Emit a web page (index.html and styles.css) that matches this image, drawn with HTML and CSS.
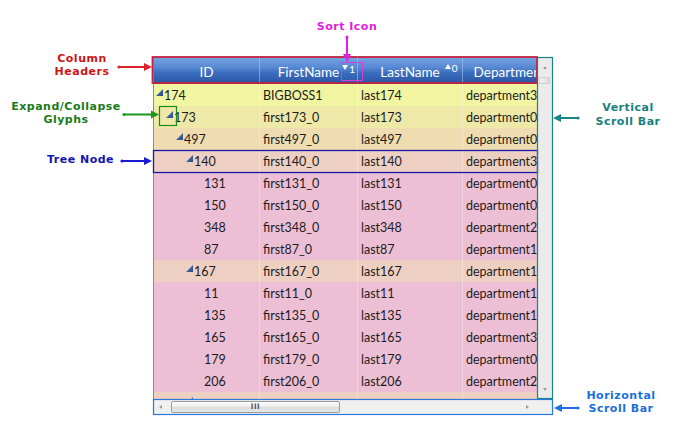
FILE: index.html
```html
<!DOCTYPE html>
<html>
<head>
<meta charset="utf-8">
<link rel="stylesheet" href="styles.css">
</head>
<body>
<div class="canvas">
  <div class="tree-grid">
    <div class="viewport">
      <div class="header">
        <div class="hcell c-id"><span class="htext">ID</span></div>
        <div class="hcell c-first"><span class="htext">FirstName<span class="sort"><svg width="6" height="5" viewBox="0 0 6 5"><polygon points="0,0 6,0 3,5" fill="#fff"/></svg><span class="snum">1</span></span></span></div>
        <div class="hcell c-last"><span class="htext">LastName<span class="sort up"><svg width="6" height="5" viewBox="0 0 6 5"><polygon points="0,5 6,5 3,0" fill="#fff"/></svg><span class="snum">0</span></span></span></div>
        <div class="hcell c-dept"><span class="htext">Department</span></div>
      </div>
      <div class="rows">
        <div class="row lv0"><div class="cell c-id ind0"><i class="glyph"></i>174</div><div class="cell c-first">BIGBOSS1</div><div class="cell c-last">last174</div><div class="cell c-dept">department3</div></div>
        <div class="row lv1"><div class="cell c-id ind1"><i class="glyph"></i>173</div><div class="cell c-first">first173_0</div><div class="cell c-last">last173</div><div class="cell c-dept">department0</div></div>
        <div class="row lv2"><div class="cell c-id ind2"><i class="glyph"></i>497</div><div class="cell c-first">first497_0</div><div class="cell c-last">last497</div><div class="cell c-dept">department0</div></div>
        <div class="row lv3"><div class="cell c-id ind3"><i class="glyph"></i>140</div><div class="cell c-first">first140_0</div><div class="cell c-last">last140</div><div class="cell c-dept">department3</div></div>
        <div class="row leaf"><div class="cell c-id ind4"><i class="noglyph"></i>131</div><div class="cell c-first">first131_0</div><div class="cell c-last">last131</div><div class="cell c-dept">department0</div></div>
        <div class="row leaf"><div class="cell c-id ind4"><i class="noglyph"></i>150</div><div class="cell c-first">first150_0</div><div class="cell c-last">last150</div><div class="cell c-dept">department0</div></div>
        <div class="row leaf"><div class="cell c-id ind4"><i class="noglyph"></i>348</div><div class="cell c-first">first348_0</div><div class="cell c-last">last348</div><div class="cell c-dept">department2</div></div>
        <div class="row leaf"><div class="cell c-id ind4"><i class="noglyph"></i>87</div><div class="cell c-first">first87_0</div><div class="cell c-last">last87</div><div class="cell c-dept">department1</div></div>
        <div class="row lv3"><div class="cell c-id ind3"><i class="glyph"></i>167</div><div class="cell c-first">first167_0</div><div class="cell c-last">last167</div><div class="cell c-dept">department1</div></div>
        <div class="row leaf"><div class="cell c-id ind4"><i class="noglyph"></i>11</div><div class="cell c-first">first11_0</div><div class="cell c-last">last11</div><div class="cell c-dept">department1</div></div>
        <div class="row leaf"><div class="cell c-id ind4"><i class="noglyph"></i>135</div><div class="cell c-first">first135_0</div><div class="cell c-last">last135</div><div class="cell c-dept">department1</div></div>
        <div class="row leaf"><div class="cell c-id ind4"><i class="noglyph"></i>165</div><div class="cell c-first">first165_0</div><div class="cell c-last">last165</div><div class="cell c-dept">department3</div></div>
        <div class="row leaf"><div class="cell c-id ind4"><i class="noglyph"></i>179</div><div class="cell c-first">first179_0</div><div class="cell c-last">last179</div><div class="cell c-dept">department0</div></div>
        <div class="row leaf"><div class="cell c-id ind4"><i class="noglyph"></i>206</div><div class="cell c-first">first206_0</div><div class="cell c-last">last206</div><div class="cell c-dept">department2</div></div>
        <div class="row lv3"><div class="cell c-id ind3"><i class="glyph"></i></div><div class="cell c-first"></div><div class="cell c-last"></div><div class="cell c-dept"></div></div>
      </div>
    </div>
    <div class="vscroll">
      <span class="arr arr-up"></span>
      <span class="vthumb"></span>
      <span class="vspace"></span>
      <span class="arr arr-down"></span>
    </div>
    <div class="hscroll">
      <span class="arr arr-left"></span>
      <span class="hthumb"><span class="grip">III</span></span>
      <span class="hspace"></span>
      <span class="arr arr-right"></span>
    </div>
    <div class="corner"></div>
  </div>

  <svg class="overlay" width="699" height="432" viewBox="0 0 699 432">
    <rect x="152.5" y="57" width="384.5" height="26" fill="none" stroke="#c4223f" stroke-width="1.8"/>
    <rect x="159.5" y="106.5" width="17" height="19" fill="none" stroke="#1c8a1c" stroke-width="1.2"/>
    <rect x="153.5" y="150.5" width="384" height="22" fill="none" stroke="#1616a8" stroke-width="1.3"/>
    <rect x="341.5" y="62.5" width="21" height="18" fill="none" stroke="#d040e0" stroke-width="1"/>
    <rect x="537.5" y="57.5" width="15" height="341" fill="none" stroke="#1a8585" stroke-width="1.2"/>
    <rect x="153.5" y="399.5" width="399" height="15" fill="none" stroke="#2a78d8" stroke-width="1.2"/>

    <line x1="119" y1="67" x2="146" y2="67" stroke="#e02028" stroke-width="2"/>
    <circle cx="119" cy="67" r="1.6" fill="#e02028"/>
    <polygon points="152,67 144,63 144,71" fill="#e02028"/>

    <line x1="124" y1="114.5" x2="152" y2="114.5" stroke="#1c961c" stroke-width="2"/>
    <circle cx="124" cy="114.5" r="1.6" fill="#1c961c"/>
    <polygon points="159,114.5 151,110.5 151,118.5" fill="#1c961c"/>

    <line x1="122" y1="161" x2="146" y2="161" stroke="#1a1ad0" stroke-width="2"/>
    <circle cx="122" cy="161" r="1.6" fill="#1a1ad0"/>
    <polygon points="152,161 144,157 144,165" fill="#1a1ad0"/>

    <line x1="347" y1="37" x2="347" y2="55" stroke="#e020e0" stroke-width="2"/>
    <circle cx="347" cy="37" r="1.6" fill="#e020e0"/>
    <polygon points="347,62 343,54 351,54" fill="#e020e0"/>

    <line x1="578" y1="118" x2="560" y2="118" stroke="#1a8585" stroke-width="2"/>
    <circle cx="578" cy="118" r="1.6" fill="#1a8585"/>
    <polygon points="553,118 561,114 561,122" fill="#1a8585"/>

    <line x1="578" y1="408" x2="561" y2="408" stroke="#1c72e0" stroke-width="2"/>
    <circle cx="578" cy="408" r="1.6" fill="#1c72e0"/>
    <polygon points="554,408 562,404 562,412" fill="#1c72e0"/>
  </svg>

  <div class="lbl lbl-headers">Column<br>Headers</div>
  <div class="lbl lbl-glyphs">Expand/Collapse<br>Glyphs</div>
  <div class="lbl lbl-node">Tree Node</div>
  <div class="lbl lbl-sort">Sort Icon</div>
  <div class="lbl lbl-vscroll">Vertical<br>Scroll Bar</div>
  <div class="lbl lbl-hscroll">Horizontal<br>Scroll Bar</div>
</div>
</body>
</html>
```
FILE: styles.css
```css
* { box-sizing: border-box; }
html, body { margin: 0; padding: 0; }
body {
  width: 699px;
  height: 432px;
  overflow: hidden;
  background: #fff;
  font-family: Lato, "Open Sans", sans-serif;
}
.canvas {
  position: relative;
  width: 699px;
  height: 432px;
}

/* ---------- tree grid widget ---------- */
.tree-grid {
  position: absolute;
  left: 153px;
  top: 57px;
  width: 399px;
  height: 358px;
  display: grid;
  grid-template-columns: 384px 15px;
  grid-template-rows: 342px 16px;
}
.viewport {
  overflow: hidden;
  border-left: 1px solid #8c8c8c;
  display: flex;
  flex-direction: column;
}
.header {
  display: flex;
  flex: none;
  height: 27px;
  background: linear-gradient(to bottom, #76a4e3 0%, #5789d3 40%, #3c6ec0 60%, #2b57a3 100%);
  border-bottom: 1px solid #284f92;
}
.hcell {
  flex: none;
  color: #fff;
  font-size: 13.5px;
  line-height: 16px;
  text-align: center;
  padding-top: 7px;
  white-space: nowrap;
  border-right: 1px solid rgba(175, 205, 245, 0.55);
}
.htext { position: relative; }
.sort {
  position: absolute;
  left: 100%;
  top: -2px;
  margin-left: 3px;
  display: flex;
  align-items: flex-start;
  gap: 1px;
  font-size: 10px;
  line-height: 10px;
}
.sort svg { margin-top: 3px; }
.sort.up { margin-left: 5px; }
.sort.up svg { margin-top: 2px; }
.snum { display: block; margin-top: 2px; }
.sort.up .snum { margin-top: 1px; }

.c-id { width: 106px; }
.c-first { width: 98px; }
.c-last { width: 105px; }
.c-dept { width: 94px; }

.rows { display: flex; flex-direction: column; }
.row {
  display: flex;
  flex: none;
  height: 22px;
  font-size: 12.5px;
  color: #1c1c1c;
}
.lv0 { background: #f1f5a2; }
.lv1 { background: #eee9a8; }
.lv2 { background: #efdcb1; }
.lv3 { background: #eed0c2; }
.leaf { background: #edbfd4; }
.cell {
  flex: none;
  display: flex;
  align-items: center;
  padding-left: 3px;
  white-space: nowrap;
  border-right: 1px solid rgba(255, 255, 255, 0.3);
}
.row .c-dept { width: 110px; border-right: none; }
.ind0 { padding-left: 2px; }
.ind1 { padding-left: 12px; }
.ind2 { padding-left: 22px; }
.ind3 { padding-left: 32px; }
.ind4 { padding-left: 42px; }
.glyph, .noglyph {
  flex: none;
  width: 7px;
  height: 7px;
  margin-right: 1px;
  align-self: flex-start;
  margin-top: 5px;
}
.glyph {
  background: linear-gradient(135deg, #6d8fc4 0%, #3d5f98 60%, #2b4a80 100%);
  clip-path: polygon(100% 0, 100% 100%, 0 100%);
}

/* ---------- scrollbars ---------- */
.vscroll {
  background: #ebebeb;
  display: flex;
  flex-direction: column;
  align-items: center;
}
.arr { display: block; width: 0; height: 0; border-style: solid; flex: none; }
.arr-up {
  margin-top: 9px;
  border-width: 0 2.5px 3px 2.5px;
  border-color: transparent transparent #9a9a9a transparent;
}
.arr-down {
  margin-bottom: 8px;
  border-width: 3px 2.5px 0 2.5px;
  border-color: #9a9a9a transparent transparent transparent;
}
.vthumb {
  display: block;
  flex: none;
  margin-top: 8px;
  width: 11px;
  height: 7px;
  background: linear-gradient(to right, #f4f4f4, #dadada);
  border: 1px solid #cfcfcf;
  border-radius: 1px;
}
.vspace, .hspace { flex: 1; }
.hscroll {
  background: #f0f0f0;
  display: flex;
  align-items: center;
  padding-left: 6px;
  padding-right: 8px;
}
.arr-left {
  border-width: 2.5px 3px 2.5px 0;
  border-color: transparent #9a9a9a transparent transparent;
}
.arr-right {
  border-width: 2.5px 0 2.5px 3px;
  border-color: transparent transparent transparent #9a9a9a;
}
.hthumb {
  display: flex;
  align-items: center;
  justify-content: center;
  flex: none;
  margin-left: 9px;
  width: 169px;
  height: 12px;
  border: 1px solid #9c9c9c;
  border-radius: 2px;
  background: linear-gradient(to bottom, #fdfdfd 0%, #ececec 50%, #dcdcdc 51%, #e6e6e6 100%);
}
.grip {
  font-family: "DejaVu Sans", sans-serif;
  font-size: 7px;
  line-height: 7px;
  letter-spacing: 0.5px;
  color: #555;
  font-weight: bold;
  transform: scaleY(1.1);
}
.corner { background: #f0f0f0; }

/* ---------- annotations ---------- */
.overlay { position: absolute; left: 0; top: 0; pointer-events: none; }
.lbl {
  position: absolute;
  font-family: "DejaVu Sans", Verdana, sans-serif;
  font-weight: bold;
  font-size: 11px;
  line-height: 13px;
  letter-spacing: 0.5px;
  text-align: center;
  white-space: nowrap;
}
.lbl-headers { left: 32px; width: 100px; top: 52px; color: #cc1515; }
.lbl-glyphs { left: 5px; width: 122px; top: 100px; color: #1a7a1a; }
.lbl-node { left: 30px; width: 101px; top: 153px; color: #1414b0; }
.lbl-sort { left: 302px; width: 90px; top: 20px; color: #dd22dd; }
.lbl-vscroll { left: 583px; width: 90px; top: 101px; line-height: 14px; color: #177f7f; }
.lbl-hscroll { left: 576px; width: 90px; top: 389px; color: #1a6fdc; }
```
